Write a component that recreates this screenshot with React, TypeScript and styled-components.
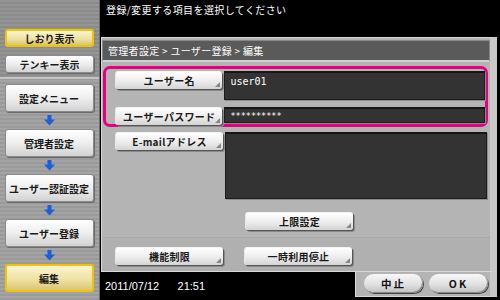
import React from "react";
import styled, { createGlobalStyle, css } from "styled-components";

const Global = createGlobalStyle`
  html, body { margin: 0; padding: 0; background: #000; }
  body { font-family: "Noto Sans CJK JP", "Noto Sans", "Liberation Sans", sans-serif; }
  * { box-sizing: border-box; }
`;

const Screen = styled.div`
  width: 500px;
  height: 300px;
  display: flex;
  overflow: hidden;
  background: #000;
`;

const Sidebar = styled.div`
  width: 100px;
  display: flex;
  flex-direction: column;
  background: repeating-linear-gradient(180deg, #a4a4a4 0px, #a4a4a4 2px, #9a9a9a 2px, #9a9a9a 4px);
  border-right: 1px solid #6c6c6c;
`;

const SideTop = styled.div`
  height: 79px;
  display: flex;
  flex-direction: column;
  gap: 8px;
  padding: 29px 6px 0 5px;
  background: repeating-linear-gradient(180deg, #959595 0px, #959595 2px, #8b8b8b 2px, #8b8b8b 4px);
  border-bottom: 2px solid #c4c4c4;
`;

const SideNav = styled.div`
  flex: 1;
  display: flex;
  flex-direction: column;
  align-items: center;
  padding: 5px 6px 0 5px;
`;

const SideButton = styled.div<{ $active?: boolean; $tall?: boolean }>`
  width: 89px;
  height: ${(p) => (p.$tall ? "28px" : "18px")};
  display: flex;
  align-items: center;
  justify-content: center;
  font-size: 10px;
  font-weight: 700;
  color: #1a1a1a;
  border-radius: 3px;
  white-space: nowrap;
  ${(p) =>
    p.$active
      ? css`
          background: linear-gradient(180deg, #fbf4cf 0%, #efe2a4 55%, #d9c572 100%);
          border: 2px solid #f2c400;
        `
      : css`
          background: linear-gradient(180deg, #ffffff 0%, #eeeeee 50%, #d2d2d2 100%);
          border: 1px solid #8a8a8a;
          box-shadow: 1px 1px 0 #6a6a6a;
        `}
`;

const Arrow = styled.div`
  height: 17px;
  display: flex;
  align-items: center;
  justify-content: center;
`;

const Main = styled.div`
  flex: 1;
  display: flex;
  flex-direction: column;
  padding-left: 1px;
`;

const Header = styled.div`
  height: 37px;
  padding: 2px 0 0 5px;
  color: #fff;
  font-size: 10px;
  line-height: 16px;
  letter-spacing: 0.4px;
`;

const Panel = styled.div`
  width: 396px;
  height: 235px;
  background: #b4b4b4;
  border: 1px solid #d8d8d8;
  border-right: 7px solid #c8c8c8;
  display: flex;
  flex-direction: column;
`;

const Crumb = styled.div`
  height: 22px;
  margin: 2px 0 0 0;
  background: #5a5a5a;
  border: 1px solid #888;
  border-bottom: 2px solid #d0d0d0;
  color: #fff;
  font-size: 10px;
  line-height: 19px;
  padding-left: 5px;
  letter-spacing: 0.3px;
`;

const Body = styled.div`
  flex: 1;
  display: flex;
  flex-direction: column;
  padding: 4px 0 0 1px;
`;

const Highlight = styled.div`
  width: 385px;
  height: 61px;
  border: 3px solid #e4007f;
  border-radius: 7px;
  display: flex;
  flex-direction: column;
  gap: 7px;
  padding: 2px 0 0 9px;
`;

const Row = styled.div`
  display: flex;
  gap: 2px;
  align-items: flex-start;
`;

const FieldButton = styled.div<{ $w?: number; $h?: number }>`
  position: relative;
  width: ${(p) => p.$w ?? 108}px;
  height: ${(p) => p.$h ?? 18}px;
  display: flex;
  align-items: center;
  justify-content: center;
  font-size: 10px;
  font-weight: 700;
  color: #1a1a1a;
  border-radius: 3px;
  background: linear-gradient(180deg, #ffffff 0%, #ececec 55%, #d4d4d4 100%);
  border-left: 1px solid #e8e8e8;
  border-top: 1px solid #f4f4f4;
  box-shadow: 1px 1px 0 #555, 2px 2px 0 #8a8a8a;
  white-space: nowrap;
  letter-spacing: 0.3px;
  &::after {
    content: "";
    position: absolute;
    right: 2px;
    bottom: 2px;
    width: 0;
    height: 0;
    border-left: 5px solid transparent;
    border-bottom: 5px solid #888;
  }
`;

const Field = styled.div<{ $h: number; $pt?: number; $fs?: number }>`
  width: 262px;
  height: ${(p) => p.$h}px;
  background: #333;
  border: 1px solid #1c1c1c;
  border-top: 2px solid #161616;
  color: #fff;
  font-family: "DejaVu Sans Mono", "Liberation Mono", monospace;
  font-size: ${(p) => p.$fs ?? 10}px;
  line-height: 12px;
  padding: ${(p) => p.$pt ?? 3}px 0 0 5px;
  box-shadow: 1px 1px 0 #8c8c8c;
`;

const EmailRow = styled(Row)`
  padding: 5px 0 0 12px;
`;

const LimitRow = styled.div`
  padding: 13px 0 0 142px;
`;

const Lower = styled.div`
  margin-top: auto;
  height: 34px;
  border-top: 1px solid #a8a8a8;
  background: #b0b0b0;
  display: flex;
  gap: 21px;
  padding: 9px 0 0 12px;
`;

const Footer = styled.div`
  display: flex;
  height: 28px;
`;

const Clock = styled.div`
  width: 254px;
  color: #fff;
  font-family: "Liberation Sans", "DejaVu Sans", sans-serif;
  font-size: 11px;
  padding: 8px 0 0 4px;
  white-space: pre;
`;

const ActionBox = styled.div`
  width: 142px;
  height: 25px;
  background: #b4b4b4;
  border-right: 7px solid #c8c8c8;
  border-bottom: 1px solid #d8d8d8;
  border-left: 1px solid #d8d8d8;
  display: flex;
  gap: 6px;
  padding: 2px 0 0 8px;
`;

const Pill = styled.div`
  width: 59px;
  height: 19px;
  border-radius: 10px;
  display: flex;
  align-items: center;
  justify-content: center;
  font-size: 10.5px;
  font-weight: 700;
  color: #111;
  letter-spacing: 2px;
  background: linear-gradient(180deg, #f8f8f8 0%, #e0e0e0 55%, #c0c0c0 100%);
  box-shadow: 1px 1px 0 #444, inset -1px -1px 0 #888;
`;

const DownArrow = () => (
  <svg width="11" height="11" viewBox="0 0 11 11">
    <rect x="3.5" y="0" width="4" height="5" fill="#1e5fd8" />
    <polygon points="0,4.5 11,4.5 5.5,10.5" fill="#1e5fd8" />
  </svg>
);

export default function App() {
  return (
    <>
      <Global />
      <Screen>
        <Sidebar>
          <SideTop>
            <SideButton $active>しおり表示</SideButton>
            <SideButton>テンキー表示</SideButton>
          </SideTop>
          <SideNav>
            <SideButton $tall>設定メニュー</SideButton>
            <Arrow><DownArrow /></Arrow>
            <SideButton $tall>管理者設定</SideButton>
            <Arrow><DownArrow /></Arrow>
            <SideButton $tall>ユーザー認証設定</SideButton>
            <Arrow><DownArrow /></Arrow>
            <SideButton $tall>ユーザー登録</SideButton>
            <Arrow><DownArrow /></Arrow>
            <SideButton $tall $active>編集</SideButton>
          </SideNav>
        </Sidebar>
        <Main>
          <Header>登録/変更する項目を選択してください</Header>
          <Panel>
            <Crumb>管理者設定 &gt; ユーザー登録 &gt; 編集</Crumb>
            <Body>
              <Highlight>
                <Row>
                  <FieldButton>ユーザー名</FieldButton>
                  <Field $h={29}>user01</Field>
                </Row>
                <Row>
                  <FieldButton>ユーザーパスワード</FieldButton>
                  <Field $h={16} $pt={1} $fs={8.5}>**********</Field>
                </Row>
              </Highlight>
              <EmailRow>
                <FieldButton>E-mailアドレス</FieldButton>
                <Field $h={67}></Field>
              </EmailRow>
              <LimitRow>
                <FieldButton>上限設定</FieldButton>
              </LimitRow>
              <Lower>
                <FieldButton>機能制限</FieldButton>
                <FieldButton>一時利用停止</FieldButton>
              </Lower>
            </Body>
          </Panel>
          <Footer>
            <Clock>{"2011/07/12      21:51"}</Clock>
            <ActionBox>
              <Pill>中止</Pill>
              <Pill>OK</Pill>
            </ActionBox>
          </Footer>
        </Main>
      </Screen>
    </>
  );
}
